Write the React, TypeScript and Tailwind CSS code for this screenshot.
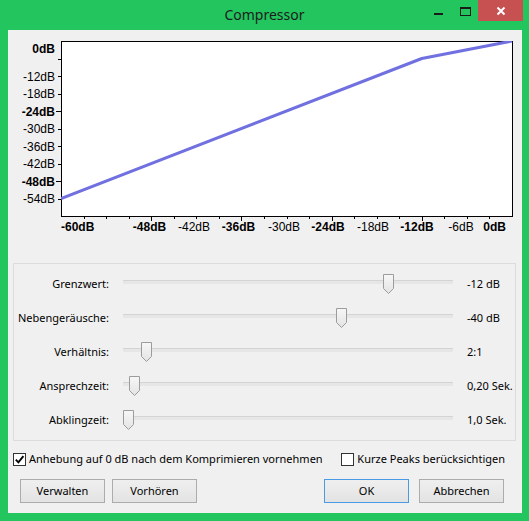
import React from "react";

const UI = '"Noto Sans", "Open Sans", sans-serif';
const AX = '"Liberation Sans", Arial, sans-serif';

const X0 = 53;
const X1 = 504;
const Y0 = 11;
const Y1 = 186;
const xs = (db: number) => X0 + ((db + 60) * (X1 - X0)) / 60;
const ys = (db: number) => Y0 + (-db * (Y1 - Y0)) / 60;

function Graph() {
  const yLabels = [
    { t: "0dB", y: 19, b: true },
    { t: "-12dB", y: ys(-12) + 0.5 },
    { t: "-18dB", y: ys(-18) + 0.5 },
    { t: "-24dB", y: ys(-24) + 0.5, b: true },
    { t: "-30dB", y: ys(-30) + 0.5 },
    { t: "-36dB", y: ys(-36) + 0.5 },
    { t: "-42dB", y: ys(-42) + 0.5 },
    { t: "-48dB", y: ys(-48) + 0.5, b: true },
    { t: "-54dB", y: ys(-54) + 0.5 },
  ];
  const xLabels: { t: string; x: number; a: "start" | "middle" | "end"; b?: boolean }[] = [
    { t: "-60dB", x: 53, a: "start", b: true },
    { t: "-48dB", x: 141.5, a: "middle", b: true },
    { t: "-42dB", x: 186, a: "middle" },
    { t: "-36dB", x: 230.5, a: "middle", b: true },
    { t: "-30dB", x: 276, a: "middle" },
    { t: "-24dB", x: 320, a: "middle", b: true },
    { t: "-18dB", x: 365, a: "middle" },
    { t: "-12dB", x: 409, a: "middle", b: true },
    { t: "-6dB", x: 453, a: "middle" },
    { t: "0dB", x: 498, a: "end", b: true },
  ];
  const xTicks: { x: number; major: boolean }[] = [];
  for (let db = -57; db <= -3; db += 3) {
    xTicks.push({ x: Math.round(xs(db)) + 0.5, major: db % 12 === 0 });
  }
  const yTicks: { y: number; major: boolean }[] = [];
  for (let db = -6; db >= -54; db -= 6) {
    yTicks.push({ y: Math.round(ys(db)) + 0.5, major: db % 24 === 0 });
  }
  const pts = [
    [X0, ys(-54)],
    [xs(-12), ys(-6)],
    [X1, ys(0)],
  ]
    .map((p) => p.join(","))
    .join(" ");
  return (
    <svg width={514} height={215} className="block shrink-0">
      <defs>
        <clipPath id="plot">
          <rect x={X0} y={Y0} width={X1 - X0 + 1} height={Y1 - Y0 + 1} />
        </clipPath>
      </defs>
      <rect x={X0 + 0.5} y={Y0 + 0.5} width={X1 - X0} height={Y1 - Y0} fill="#ffffff" stroke="#000000" strokeWidth={1} />
      <polyline points={pts} fill="none" stroke="#7070e0" strokeWidth={3} strokeLinejoin="round" clipPath="url(#plot)" />
      {yTicks.map((t, i) => (
        <line key={i} x1={X0 - (t.major ? 5 : 3)} x2={X0} y1={t.y} y2={t.y} stroke="#000" strokeWidth={1} />
      ))}
      {xTicks.map((t, i) => (
        <line key={i} x1={t.x} x2={t.x} y1={Y1 + 1} y2={Y1 + (t.major ? 5 : 3)} stroke="#000" strokeWidth={1} />
      ))}
      {yLabels.map((l) => (
        <text
          key={l.t}
          x={47}
          y={l.y + 4.3}
          textAnchor="end"
          fontFamily={AX}
          fontSize={12}
          fontWeight={l.b ? 700 : 400}
          fill="#000"
        >
          {l.t}
        </text>
      ))}
      {xLabels.map((l) => (
        <text
          key={l.t}
          x={l.x}
          y={201.3}
          textAnchor={l.a}
          fontFamily={AX}
          fontSize={12}
          fontWeight={l.b ? 700 : 400}
          fill="#000"
        >
          {l.t}
        </text>
      ))}
    </svg>
  );
}

function Thumb() {
  return (
    <svg width={11} height={20} className="block">
      <defs>
        <linearGradient id="tg" x1="0" y1="0" x2="0" y2="1">
          <stop offset="0" stopColor="#f7f7f7" />
          <stop offset="1" stopColor="#e3e3e3" />
        </linearGradient>
      </defs>
      <path d="M0.5 0.5 H10.5 V14.5 L5.5 19.5 L0.5 14.5 Z" fill="url(#tg)" stroke="#9c9c9c" strokeWidth={1} />
    </svg>
  );
}

const sliders = [
  { label: "Grenzwert:", val: "-12 dB", left: 260 },
  { label: "Nebengeräusche:", val: "-40 dB", left: 213 },
  { label: "Verhältnis:", val: "2:1", left: 18 },
  { label: "Ansprechzeit:", val: "0,20 Sek.", left: 6 },
  { label: "Abklingzeit:", val: "1,0 Sek.", left: 0 },
];

function Checkbox({ checked }: { checked: boolean }) {
  return (
    <div className="w-[13px] h-[13px] border border-[#333333] bg-white shrink-0 flex items-center justify-center">
      {checked && (
        <svg width={11} height={11} className="block">
          <path d="M1.8 5.6 L4.4 8.3 L9.4 2.2" fill="none" stroke="#000" strokeWidth={1.9} />
        </svg>
      )}
    </div>
  );
}

function Button({ children, def }: { children: React.ReactNode; def?: boolean }) {
  return (
    <div
      className={`w-[85px] h-[24px] flex items-center justify-center text-[11px] text-black bg-gradient-to-b from-[#efefef] to-[#e3e3e3] border ${
        def ? "border-[#4a9be6]" : "border-[#acacac]"
      }`}
    >
      {children}
    </div>
  );
}

export default function App() {
  return (
    <div className="w-[529px] h-[521px] bg-[#22c55e] flex flex-col" style={{ fontFamily: UI }}>
      <div className="h-[30px] relative flex items-center justify-center shrink-0">
        <span className="text-[14px] text-[#1c1c1c] leading-none">Compressor</span>
        <div className="absolute right-[6px] top-0 flex items-start">
          <div className="mt-[13px] w-[9px] h-[2px] bg-[#1a1a1a]" />
          <div className="ml-[17px] mt-[7px] w-[11px] h-[9px] border border-t-2 border-[#1a1a1a]" />
          <div className="ml-[7px] w-[45px] h-[21px] bg-[#c75050] flex items-center justify-center">
            <svg width={10} height={10} className="block">
              <path d="M1.5 1.5 L8.5 8.5 M8.5 1.5 L1.5 8.5" stroke="#ffffff" strokeWidth={2} />
            </svg>
          </div>
        </div>
      </div>
      <div className="ml-[8px] mr-[7px] h-[483px] bg-[#f0f0f0] flex flex-col">
        <Graph />
        <div className="mt-[18px] ml-[5px] w-[503px] h-[178px] border border-[#dcdcdc] pt-[3px] flex flex-col">
          {sliders.map((s) => (
            <div key={s.label} className="h-[34px] flex items-center text-[11px] text-black">
              <div className="w-[95px] text-right whitespace-nowrap">{s.label}</div>
              <div className="ml-[14px] w-[330px] h-[20px] mb-[4px] relative">
                <div className="absolute left-0 right-0 top-[8px] h-[4px] bg-[#e6e6e6] border-t border-[#d4d4d4]" />
                <div className="absolute top-[2px]" style={{ left: s.left }}>
                  <Thumb />
                </div>
              </div>
              <div className="ml-[14px] whitespace-nowrap">{s.val}</div>
            </div>
          ))}
        </div>
        <div className="mt-[10px] h-[16px] flex items-center text-[11px] text-black">
          <div className="ml-[5px] flex items-center">
            <Checkbox checked />
            <span className="ml-[3px] whitespace-nowrap">Anhebung auf 0 dB nach dem Komprimieren vornehmen</span>
          </div>
          <div className="ml-auto mr-[17px] flex items-center">
            <Checkbox checked={false} />
            <span className="ml-[3px] whitespace-nowrap">Kurze Peaks berücksichtigen</span>
          </div>
        </div>
        <div className="mt-[12px] flex items-center ml-[12px] mr-[18px]">
          <Button>Verwalten</Button>
          <div className="ml-[7px]">
            <Button>Vorhören</Button>
          </div>
          <div className="ml-auto">
            <Button def>OK</Button>
          </div>
          <div className="ml-[10px]">
            <Button>Abbrechen</Button>
          </div>
        </div>
      </div>
    </div>
  );
}
